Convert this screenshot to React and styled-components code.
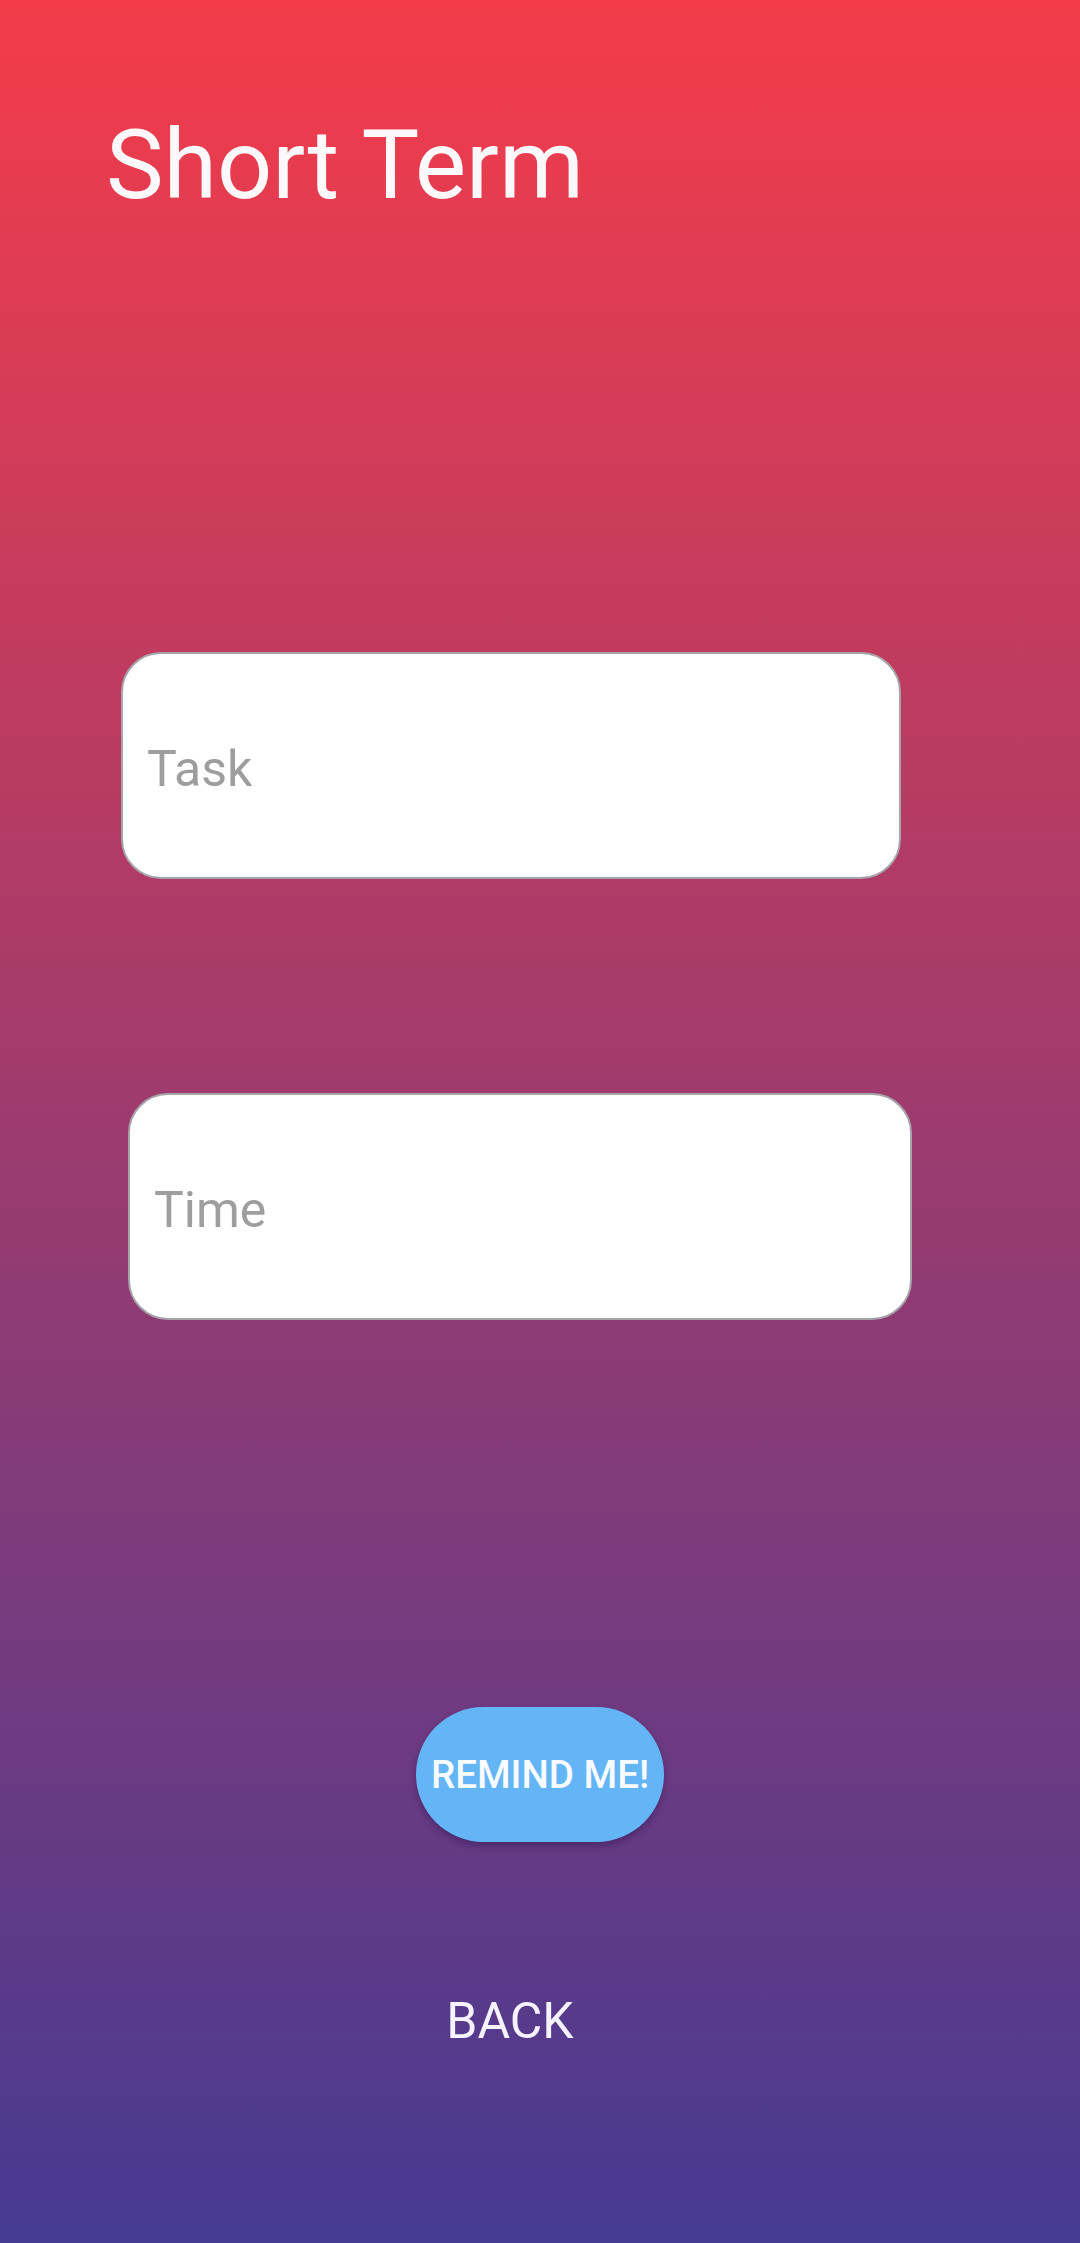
import styled, { createGlobalStyle } from "styled-components";
import { useState } from "react";

const GlobalStyle = createGlobalStyle`
  html, body {
    margin: 0;
    padding: 0;
  }

  * {
    box-sizing: border-box;
  }

  body {
    font-family: Roboto, "Noto Sans", sans-serif;
  }
`;

const Screen = styled.div`
  min-height: 100vh;
  display: flex;
  flex-direction: column;
  background: linear-gradient(to bottom, #f43c4a 0%, #463a92 100%);
  padding: 116px 0 0 0;
`;

const Title = styled.h1`
  margin: 0 0 0 106px;
  font-size: 97px;
  line-height: 99px;
  font-weight: 400;
  color: #fdf8fa;
`;

const Field = styled.input`
  display: block;
  width: ${(p) => p.$width}px;
  height: 227px;
  margin: ${(p) => p.$top}px 0 0 ${(p) => p.$left}px;
  padding: 7px 24px 0 24px;
  border: 2px solid #a6a4a8;
  border-radius: 40px;
  background: #ffffff;
  font-family: Roboto, "Noto Sans", sans-serif;
  font-size: 50px;
  color: #333;
  outline: none;

  &::placeholder {
    color: #9e9e9e;
  }
`;

const Actions = styled.div`
  display: flex;
  flex-direction: column;
  align-items: center;
  margin-top: 387px;
`;

const RemindButton = styled.button`
  width: 248px;
  height: 135px;
  border: none;
  border-radius: 68px;
  background: #64b5f6;
  box-shadow: 0 4px 7px rgba(30, 10, 60, 0.35);
  color: #f8fbff;
  font-family: Roboto, "Noto Sans", sans-serif;
  font-size: 38.5px;
  font-weight: 500;
  padding: 0;
  cursor: pointer;
`;

const BackButton = styled.button`
  margin: 154px 60px 0 0;
  padding: 0;
  border: none;
  background: none;
  color: #f7f2ff;
  font-family: Roboto, "Noto Sans", sans-serif;
  font-size: 50px;
  line-height: 1;
  font-weight: 400;
  cursor: pointer;
`;

// 단기 알림 화면
const App = () => {
  const [task, setTask] = useState("");
  const [time, setTime] = useState("");

  return (
    <>
      <GlobalStyle />
      <Screen>
        <Title>Short Term</Title>
        <Field
          $top={437}
          $left={121}
          $width={780}
          placeholder="Task"
          value={task}
          onChange={(e) => setTask(e.target.value)}
        />
        <Field
          $top={214}
          $left={128}
          $width={784}
          placeholder="Time"
          value={time}
          onChange={(e) => setTime(e.target.value)}
        />
        <Actions>
          <RemindButton>REMIND ME!</RemindButton>
          <BackButton>BACK</BackButton>
        </Actions>
      </Screen>
    </>
  );
};

export default App;
